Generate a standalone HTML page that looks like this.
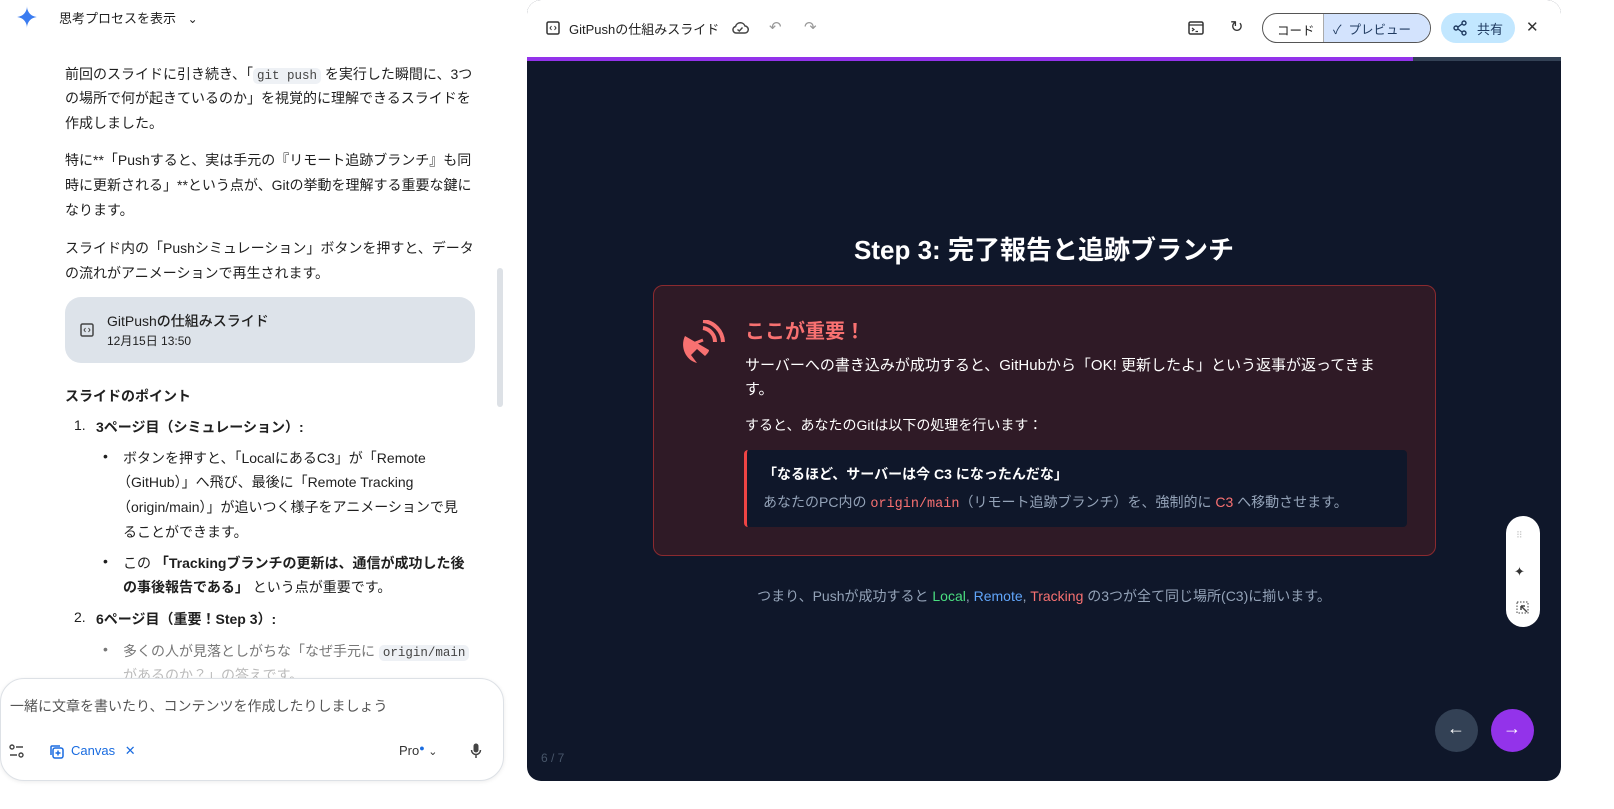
<!DOCTYPE html>
<html><head><meta charset="utf-8"><style>
*{margin:0;padding:0;box-sizing:border-box}
body{width:1614px;height:809px;background:#fff;font-family:"Liberation Sans","Noto Sans CJK JP",sans-serif;position:relative;overflow:hidden;color:#1f1f1f}
.a{position:absolute;white-space:nowrap}
.t{font-size:14px;color:#1f1f1f}
code{font-family:"Liberation Mono",monospace;font-size:12.5px;background:#eef1f5;border-radius:5px;padding:1px 4px;color:#444}
b{font-weight:bold}
.m{font-family:"Liberation Mono",monospace}
</style></head><body>
<!-- left panel -->
<svg class="a" style="left:16px;top:6px" width="22" height="22" viewBox="0 0 24 24"><path d="M12 0C12 7 17 12 24 12C17 12 12 17 12 24C12 17 7 12 0 12C7 12 12 7 12 0Z" fill="#3b7cf0"/></svg>
<div class="a" style="left:59px;top:8px;font-size:13px">思考プロセスを表示 <span style="margin-left:8px;font-size:12px">&#8964;</span></div>
<div class="a t" style="left:65px;top:64px">前回のスライドに引き続き、「<code>git push</code> を実行した瞬間に、3つ</div>
<div class="a t" style="left:65px;top:88px">の場所で何が起きているのか」を視覚的に理解できるスライドを</div>
<div class="a t" style="left:65px;top:113px">作成しました。</div>
<div class="a t" style="left:65px;top:150px">特に**「Pushすると、実は手元の『リモート追跡ブランチ』も同</div>
<div class="a t" style="left:65px;top:175px">時に更新される」**という点が、Gitの挙動を理解する重要な鍵に</div>
<div class="a t" style="left:65px;top:200px">なります。</div>
<div class="a t" style="left:65px;top:238px">スライド内の「Pushシミュレーション」ボタンを押すと、データ</div>
<div class="a t" style="left:65px;top:263px">の流れがアニメーションで再生されます。</div>
<div class="a" style="left:497px;top:268px;width:6px;height:139px;background:#dde1e6;border-radius:3px"></div>
<div class="a" style="left:65px;top:297px;width:410px;height:66px;background:#dde3ea;border-radius:16px"></div>
<svg class="a" style="left:80px;top:323px" width="14" height="14" viewBox="0 0 14 14"><rect x="1" y="1" width="12" height="12" rx="1.5" fill="none" stroke="#444" stroke-width="1.5"/><path d="M5.5 5L4 7L5.5 9M8.5 5L10 7L8.5 9" stroke="#444" fill="none"/></svg>
<div class="a" style="left:107px;top:311px;font-size:14px;font-weight:500">GitPushの仕組みスライド</div>
<div class="a" style="left:107px;top:332px;font-size:12px">12月15日 13:50</div>
<div class="a t" style="left:65px;top:386px;font-weight:bold">スライドのポイント</div>
<div class="a t" style="left:74px;top:417px">1.</div>
<div class="a t" style="left:96px;top:417px;font-weight:bold">3ページ目（シミュレーション）:</div>
<div class="a t" style="left:103px;top:448px">•</div>
<div class="a t" style="left:123px;top:448px">ボタンを押すと、「LocalにあるC3」が「Remote</div>
<div class="a t" style="left:117px;top:472px">（GitHub）」へ飛び、最後に「Remote Tracking</div>
<div class="a t" style="left:117px;top:497px">（origin/main）」が追いつく様子をアニメーションで見</div>
<div class="a t" style="left:123px;top:522px">ることができます。</div>
<div class="a t" style="left:103px;top:553px">•</div>
<div class="a t" style="left:123px;top:553px">この <b>「Trackingブランチの更新は、通信が成功した後</b></div>
<div class="a t" style="left:123px;top:577px"><b>の事後報告である」</b> という点が重要です。</div>
<div class="a t" style="left:74px;top:609px">2.</div>
<div class="a t" style="left:96px;top:609px;font-weight:bold">6ページ目（重要！Step 3）:</div>
<div class="a t" style="left:103px;top:641px;color:#777">•</div>
<div class="a t" style="left:123px;top:641px;color:#777">多くの人が見落としがちな「なぜ手元に <code>origin/main</code></div>
<div class="a t" style="left:123px;top:665px;color:#bbb">があるのか？」の答えです。</div>
<div class="a" style="left:0;top:678px;width:504px;height:103px;background:#fff;border:1px solid #dde1e6;border-radius:24px;box-shadow:0 1px 4px rgba(0,0,0,.08)"></div>
<div class="a" style="left:10px;top:696px;font-size:14px;color:#555">一緒に文章を書いたり、コンテンツを作成したりしましょう</div>
<svg class="a" style="left:9px;top:744px" width="16" height="14" viewBox="0 0 16 14"><circle cx="3" cy="3" r="2" fill="none" stroke="#444" stroke-width="1.4"/><path d="M7 3H14M1 11H8" stroke="#444" stroke-width="1.4"/><circle cx="12" cy="11" r="2" fill="none" stroke="#444" stroke-width="1.4"/></svg>
<svg class="a" style="left:49px;top:744px" width="16" height="16" viewBox="0 0 16 16"><rect x="4" y="4" width="10" height="10" rx="2" fill="none" stroke="#1a6ce0" stroke-width="1.5"/><path d="M2 11V3a1 1 0 0 1 1-1h8M9 6.5v5M6.5 9h5" stroke="#1a6ce0" stroke-width="1.5" fill="none"/></svg>
<div class="a" style="left:71px;top:743px;font-size:13px;color:#1a6ce0">Canvas <span style="margin-left:6px">✕</span></div>
<div class="a" style="left:399px;top:743px;font-size:13px;color:#333">Pro<span style="color:#1a6ce0;font-size:9px;vertical-align:top">●</span> <span style="font-size:11px">&#8964;</span></div>
<svg class="a" style="left:470px;top:743px" width="12" height="16" viewBox="0 0 12 16"><rect x="3.5" y="0.5" width="5" height="9" rx="2.5" fill="#444"/><path d="M1.5 7a4.5 4.5 0 0 0 9 0M6 11.5V15" stroke="#444" stroke-width="1.5" fill="none"/></svg>

<!-- right panel -->
<div class="a" style="left:527px;top:0;width:1034px;height:781px;background:#0f172a;border-radius:14px;overflow:hidden">
  <div class="a" style="left:0;top:0;width:1034px;height:57px;background:#fff"></div>
  <div class="a" style="left:0;top:57px;width:886px;height:4px;background:#9333ea"></div>
  <div class="a" style="left:886px;top:57px;width:148px;height:4px;background:#334155"></div>
</div>
<svg class="a" style="left:546px;top:21px" width="14" height="14" viewBox="0 0 14 14"><rect x="1" y="1" width="12" height="12" rx="1.5" fill="none" stroke="#333" stroke-width="1.5"/><path d="M5.5 5L4 7L5.5 9M8.5 5L10 7L8.5 9" stroke="#333" fill="none"/></svg>
<div class="a" style="left:569px;top:19px;font-size:13px;color:#222">GitPushの仕組みスライド</div>
<svg class="a" style="left:731px;top:20px" width="18" height="16" viewBox="0 0 18 16"><path d="M5 13H13.5a3.5 3.5 0 0 0 .5-7A5 5 0 0 0 4.5 6.5 3.3 3.3 0 0 0 5 13Z" fill="none" stroke="#444" stroke-width="1.5"/><path d="M6.5 9.5L8.3 11 11.5 7.5" stroke="#444" stroke-width="1.4" fill="none"/></svg>
<div class="a" style="left:769px;top:18px;font-size:15px;color:#999">↶</div>
<div class="a" style="left:804px;top:18px;font-size:15px;color:#999">↷</div>
<svg class="a" style="left:1188px;top:21px" width="16" height="14" viewBox="0 0 16 14"><rect x="1" y="1" width="14" height="12" rx="1.5" fill="none" stroke="#333" stroke-width="1.5"/><path d="M1 4H15M4 7L6 8.5 4 10M7.5 10.5H10" stroke="#333" stroke-width="1.2" fill="none"/></svg>
<div class="a" style="left:1230px;top:17px;font-size:16px;color:#333">↻</div>
<div class="a" style="left:1262px;top:13px;width:169px;height:30px;border:1px solid #555;border-radius:15px;overflow:hidden;background:#fff">
  <div class="a" style="left:60px;top:0;width:109px;height:30px;background:#d3e3fd;border-left:1px solid #aaa"></div>
  <div class="a" style="left:14px;top:6px;font-size:12.5px;color:#222">コード</div>
  <div class="a" style="left:70px;top:5px;font-size:12.5px;color:#1f3a60">✓ &nbsp;プレビュー</div>
</div>
<div class="a" style="left:1441px;top:13px;width:74px;height:30px;border-radius:15px;background:#c2e7ff"></div>
<svg class="a" style="left:1453px;top:20px" width="14" height="16" viewBox="0 0 14 16"><circle cx="11" cy="3" r="2" fill="none" stroke="#1f3a60" stroke-width="1.4"/><circle cx="3" cy="8" r="2" fill="none" stroke="#1f3a60" stroke-width="1.4"/><circle cx="11" cy="13" r="2" fill="none" stroke="#1f3a60" stroke-width="1.4"/><path d="M5 7L9 4M5 9L9 12" stroke="#1f3a60" stroke-width="1.4"/></svg>
<div class="a" style="left:1477px;top:19px;font-size:13px;color:#1f3a60">共有</div>
<div class="a" style="left:1526px;top:18px;font-size:15px;color:#333">✕</div>

<div class="a" style="left:527px;top:230px;width:1034px;text-align:center;font-size:26px;font-weight:bold;color:#fff">Step 3: 完了報告と追跡ブランチ</div>
<div class="a" style="left:653px;top:285px;width:783px;height:271px;background:#2f1a26;border:1px solid #8b2a2f;border-radius:10px"></div>
<svg class="a" style="left:681px;top:320px" width="44" height="46" viewBox="0 0 44 46"><path d="M4 16C-1 26 4 40 16 43L10 35 16 29 24 36C26 34 28 32 28 30Z" fill="#f87171"/><path d="M12 24L22 20" stroke="#f87171" stroke-width="3"/><path d="M22 8A14 14 0 0 1 34 22" stroke="#f87171" stroke-width="4" fill="none"/><path d="M22 1A22 22 0 0 1 42 22" stroke="#f87171" stroke-width="4" fill="none"/></svg>
<div class="a" style="left:745px;top:315px;font-size:20px;font-weight:bold;color:#f87171">ここが重要！</div>
<div class="a" style="left:745px;top:354px;font-size:15px;color:#fff">サーバーへの書き込みが成功すると、GitHubから「OK! 更新したよ」という返事が返ってきま</div>
<div class="a" style="left:745px;top:378px;font-size:15px;color:#fff">す。</div>
<div class="a" style="left:745px;top:415px;font-size:14px;color:#fff">すると、あなたのGitは以下の処理を行います：</div>
<div class="a" style="left:744px;top:450px;width:663px;height:77px;background:#0f172a;border-left:3px solid #ef4444;border-radius:4px"></div>
<div class="a" style="left:763px;top:464px;font-size:14px;font-weight:bold;color:#fff">「なるほど、サーバーは今 C3 になったんだな」</div>
<div class="a" style="left:763px;top:492px;font-size:14px;color:#94a3b8">あなたのPC内の <span class="m" style="color:#f87171;font-size:13.5px">origin/main</span>（リモート追跡ブランチ）を、強制的に <span style="color:#f87171">C3</span> へ移動させます。</div>
<div class="a" style="left:527px;top:586px;width:1034px;text-align:center;font-size:14px;color:#94a3b8">つまり、Pushが成功すると <span style="color:#4ade80">Local</span>, <span style="color:#60a5fa">Remote</span>, <span style="color:#f87171">Tracking</span> の3つが全て同じ場所(C3)に揃います。</div>
<div class="a" style="left:541px;top:751px;font-size:12px;color:#475569">6 / 7</div>
<div class="a" style="left:1506px;top:516px;width:34px;height:111px;background:#fff;border-radius:17px"></div>
<div class="a" style="left:1516px;top:530px;font-size:9px;color:#ccc;letter-spacing:-1px">⠿</div>
<div class="a" style="left:1514px;top:564px;font-size:13px;color:#333">✦</div>
<svg class="a" style="left:1516px;top:601px" width="13" height="13" viewBox="0 0 13 13"><rect x="1" y="1" width="11" height="11" fill="none" stroke="#444" stroke-dasharray="1.5 1.5"/><path d="M5 5L11 11M5 5H9M5 5V9" stroke="#444" stroke-width="1.5"/></svg>
<div class="a" style="left:1435px;top:709px;width:43px;height:43px;border-radius:50%;background:#334155"></div>
<div class="a" style="left:1447px;top:718px;font-size:18px;color:#fff;font-weight:bold">←</div>
<div class="a" style="left:1491px;top:709px;width:43px;height:43px;border-radius:50%;background:#9333ea"></div>
<div class="a" style="left:1503px;top:718px;font-size:18px;color:#fff;font-weight:bold">→</div>
</body></html>
